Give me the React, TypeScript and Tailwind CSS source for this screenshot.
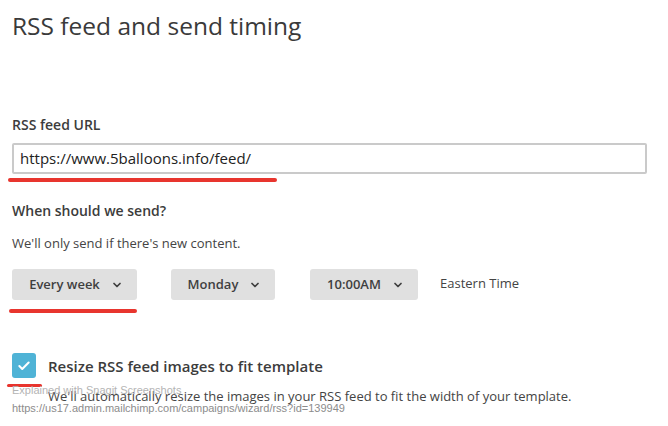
import { ChevronDown, Check } from "lucide-react";

function SelectButton({ label, width }: { label: string; width: string }) {
  return (
    <button
      className={`flex h-[31px] items-center justify-center gap-[11px] rounded-[3px] bg-[#e0e0e0] pl-[3px] text-[13px] font-semibold text-[#3f3f3f] ${width}`}
    >
      <span>{label}</span>
      <ChevronDown className="h-3 w-3" strokeWidth={3.5} />
    </button>
  );
}

export default function App() {
  return (
    <div
      className="relative h-[426px] w-[668px] overflow-hidden bg-white px-3 text-[#3c3c3c]"
      style={{ fontFamily: '"Open Sans", sans-serif' }}
    >
      <h1 className="pt-[9px] text-[24.5px] leading-[34px] text-[#3a3a3a]">RSS feed and send timing</h1>

      {/* feed url */}
      <div className="mt-[72px] text-[14px] font-semibold leading-[20px]">RSS feed URL</div>
      <div className="mt-[8px] flex h-[31px] w-[635px] items-center rounded-[2px] border-2 border-[#cacaca] px-[6px] text-[15px] text-[#222]">
        https://www.5balloons.info/feed/
      </div>
      <div className="-ml-1 mt-[4px] h-[4px] w-[269px] rounded-full bg-[#e8352e]" />

      {/* timing */}
      <div className="mt-[19px] text-[14px] font-semibold leading-[20px]">When should we send?</div>
      <div className="mt-[13px] text-[13px] leading-[18px] text-[#444]">We'll only send if there's new content.</div>
      <div className="mt-[17px] flex items-start">
        <SelectButton label="Every week" width="w-[125px]" />
        <div className="ml-[34px]">
          <SelectButton label="Monday" width="w-[104px]" />
        </div>
        <div className="ml-[35px]">
          <SelectButton label="10:00AM" width="w-[108px]" />
        </div>
        <span className="ml-[22px] pt-[5px] text-[13px] leading-[18px] text-[#444]">Eastern Time</span>
      </div>
      <div className="-ml-[3px] mt-[9px] h-[4px] w-[128px] rounded-full bg-[#e8352e]" />

      {/* resize option */}
      <div className="mt-[40px] flex items-start gap-3">
        <div className="flex h-[25px] w-[24px] shrink-0 items-center justify-center rounded-[3px] bg-[#4fb3d6]">
          <Check className="h-[14px] w-[14px] text-white" strokeWidth={3.5} />
        </div>
        <div className="pt-[3px]">
          <div className="text-[15px] font-semibold leading-[20px] text-[#3c3c3c]">Resize RSS feed images to fit template</div>
          <div className="mt-[11px] text-[13px] leading-[18px] text-[#444]">
            We'll automatically resize the images in your RSS feed to fit the width of your template.
          </div>
        </div>
      </div>

      {/* snagit caption overlay */}
      <div className="absolute left-[7px] top-[384px] h-[3px] w-[35px] rounded-full bg-[#e8352e]" />
      <div
        className="absolute left-3 top-[383px] text-[11px] leading-[14px] text-[#b4b4b4]"
        style={{ fontFamily: '"Liberation Sans", Arial, sans-serif' }}
      >
        Explained with Snagit Screenshots
      </div>
      <div
        className="absolute left-3 top-[401px] text-[11px] leading-[14px] text-[#8c8c8c]"
        style={{ fontFamily: '"Liberation Sans", Arial, sans-serif' }}
      >
        https://us17.admin.mailchimp.com/campaigns/wizard/rss?id=139949
      </div>
    </div>
  );
}
